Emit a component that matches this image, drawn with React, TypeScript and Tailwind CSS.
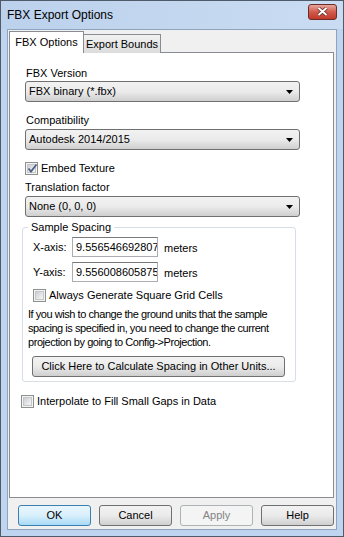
import React from "react"

const font = { fontFamily: '"Liberation Sans", Arial, sans-serif' }

const Check = ({ checked }: { checked?: boolean }) => (
    <div className="w-[13px] h-[13px] border border-[#8e8f8f] bg-[#f4f4f4] p-[1px] shrink-0">
        <div className="w-full h-full border border-[#c6c6c6] bg-gradient-to-br from-[#cbcfd5] to-[#f6f6f6] relative">
            {checked && (
                <svg className="absolute -left-[1px] -top-[2px]" width="11" height="11" viewBox="0 0 11 11">
                    <path d="M1.5 5.5 L4 8.5 L9.5 1.5" fill="none" stroke="#4d6185" strokeWidth="1.8" />
                </svg>
            )}
        </div>
    </div>
)

const Select = ({ value }: { value: string }) => (
    <div className="w-[275px] h-[21px] rounded-[3px] border border-[#707070] bg-gradient-to-b from-[#f2f2f2] via-[#ebebeb] to-[#cfcfcf] flex items-center justify-between pl-[3px] pr-[6px]">
        <span className="text-[11px] leading-[13px] text-black">{value}</span>
        <svg width="7" height="4" viewBox="0 0 7 4">
            <path d="M0 0 H7 L3.5 4 Z" fill="#000" />
        </svg>
    </div>
)

const Button = ({ label, primary, disabled, className = "w-[73px]" }: { label: string; primary?: boolean; disabled?: boolean; className?: string }) => (
    <div
        className={
            "h-[21px] rounded-[3px] border flex items-center justify-center text-[11px] " +
            className +
            (disabled
                ? " border-[#adb2b5] bg-[#f4f4f4] text-[#838383]"
                : primary
                ? " border-[#3c7fb1] bg-gradient-to-b from-[#eaf6fd] via-[#d9f0fc] to-[#a7d9f5] text-black"
                : " border-[#707070] bg-gradient-to-b from-[#f2f2f2] via-[#ebebeb] to-[#cfcfcf] text-black")
        }
    >
        {label}
    </div>
)

const NumInput = ({ value }: { value: string }) => (
    <div className="w-[86px] h-[20px] border border-[#abadb3] border-t-[#7a7a7a] bg-white flex items-center pl-[3px] text-[11px] overflow-hidden whitespace-nowrap">
        {value}
    </div>
)

export default function App() {
    return (
        <div style={font} className="w-[344px] h-[537px] bg-[#bfd4ee] border border-[#4f5a6a] flex flex-col text-black">
            {/* title bar */}
            <div className="h-[28px] flex items-center justify-between pl-[6px] pr-[6px] bg-gradient-to-r from-[#bcd1ec] to-[#c9dcf2]">
                <span className="text-[12px] leading-[14px] -mt-[1px]">FBX Export Options</span>
                <div className="w-[29px] h-[16px] -mt-[7px] rounded-[3px] border border-[#6b2c27] bg-gradient-to-b from-[#e7a59d] via-[#d1594b] to-[#c0392b] flex items-center justify-center">
                    <svg width="11" height="9" viewBox="0 0 11 9">
                        <path d="M1.5 1 L9.5 8 M9.5 1 L1.5 8" stroke="#5a2520" strokeWidth="3.4" />
                        <path d="M1.5 1 L9.5 8 M9.5 1 L1.5 8" stroke="#fff" strokeWidth="2" />
                    </svg>
                </div>
            </div>

            {/* client */}
            <div className="flex-1 mx-[6px] mb-[6px] border border-[#8ea3bd] bg-[#f0f0f0] flex flex-col">
                <div className="flex flex-col pl-[1px] pr-[2px] pt-[1px]">
                    {/* tabs */}
                    <div className="flex items-end h-[22px] relative z-10">
                        <div className="h-[22px] w-[75px] bg-white border border-[#898c95] border-b-0 flex items-center justify-center text-[11px] pb-[1px]">
                            FBX Options
                        </div>
                        <div className="h-[19px] w-[78px] -ml-[1px] bg-gradient-to-b from-[#f2f2f2] to-[#dcdcdc] border border-[#898c95] border-b-0 flex items-center justify-center text-[11px]">
                            Export Bounds
                        </div>
                    </div>
                    {/* panel */}
                    <div className="h-[446px] -mt-[1px] border border-[#898c95] bg-white flex flex-col pl-[15px] pt-[14px]">
                        <span className="text-[11px] leading-[13px] pl-[1px]">FBX Version</span>
                        <div className="mt-[1px]">
                            <Select value="FBX binary (*.fbx)" />
                        </div>
                        <span className="text-[11px] leading-[13px] mt-[12px] pl-[1px]">Compatibility</span>
                        <div className="mt-[2px]">
                            <Select value="Autodesk 2014/2015" />
                        </div>
                        <div className="flex items-center gap-[3px] mt-[12px]">
                            <Check checked />
                            <span className="text-[11px] leading-[13px]">Embed Texture</span>
                        </div>
                        <span className="text-[11px] leading-[13px] mt-[6px]">Translation factor</span>
                        <div className="mt-[2px]">
                            <Select value="None (0, 0, 0)" />
                        </div>

                        {/* group box */}
                        <fieldset className="-ml-[3px] mt-[4px] w-[274px] h-[161px] border border-[#d5dfe5] rounded-[3px] flex flex-col">
                            <legend className="ml-[5px] px-[3px] text-[11px] leading-[13px]">Sample Spacing</legend>
                            <div className="flex items-center mt-[3px] pl-[10px]">
                                <span className="text-[11px] w-[39px]">X-axis:</span>
                                <NumInput value="9.556546692807" />
                                <span className="text-[11px] ml-[6px] mt-[2px]">meters</span>
                            </div>
                            <div className="flex items-center mt-[5px] pl-[10px]">
                                <span className="text-[11px] w-[39px]">Y-axis:</span>
                                <NumInput value="9.556008605875" />
                                <span className="text-[11px] ml-[6px] mt-[2px]">meters</span>
                            </div>
                            <div className="flex items-center gap-[3px] mt-[7px] pl-[10px]">
                                <Check />
                                <span className="text-[11px] leading-[13px]">Always Generate Square Grid Cells</span>
                            </div>
                            <p className="text-[11px] leading-[14px] tracking-[-0.45px] whitespace-nowrap mt-[5px] pl-[5px]">
                                If you wish to change the ground units that the sample
                                <br />
                                spacing is specified in, you need to change the current
                                <br />
                                projection by going to Config-&gt;Projection.
                            </p>
                            <div className="mt-[7px] pl-[9px]">
                                <Button label="Click Here to Calculate Spacing in Other Units..." className="w-[253px]" />
                            </div>
                        </fieldset>

                        <div className="flex items-center gap-[3px] mt-[13px] -ml-[4px]">
                            <Check />
                            <span className="text-[11px] leading-[13px]">Interpolate to Fill Small Gaps in Data</span>
                        </div>
                    </div>
                </div>

                {/* buttons */}
                <div className="flex justify-end gap-[8px] pr-[2px] mt-[7px]">
                    <Button label="OK" primary />
                    <Button label="Cancel" />
                    <Button label="Apply" disabled />
                    <Button label="Help" />
                </div>
            </div>
        </div>
    )
}
